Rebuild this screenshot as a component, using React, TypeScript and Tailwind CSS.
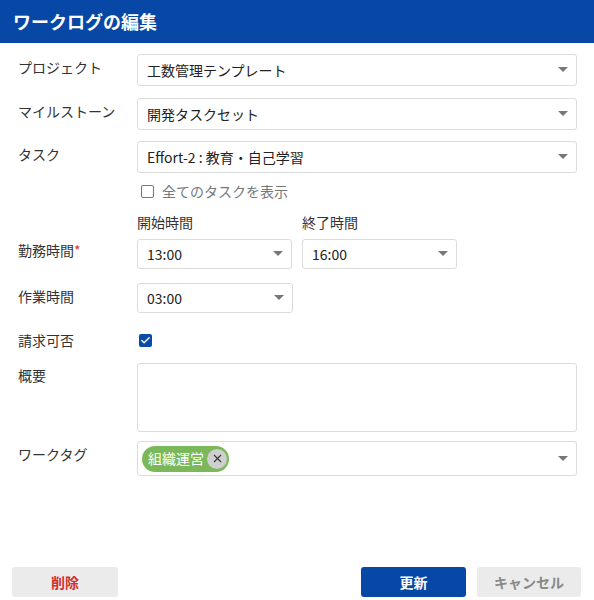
import { Check, X } from 'lucide-react';

const font = { fontFamily: '"Noto Sans CJK JP", "Noto Sans", sans-serif' };

function Caret() {
  return (
    <svg width="10" height="6" viewBox="0 0 10 6" className="shrink-0">
      <path d="M0 0h10L5 5z" fill="#777" />
    </svg>
  );
}

function Select({ value, width = 'w-[440px]', height = 'h-[32px]' }: { value: string; width?: string; height?: string }) {
  return (
    <div
      className={`flex ${width} ${height} items-center justify-between rounded-[3px] border border-[#dcdcdc] bg-white pl-[9px] pr-[8px] text-[14px] text-[#222]`}
    >
      <span>{value}</span>
      <Caret />
    </div>
  );
}

function Row({ label, required, children, top, labelPad = 'pt-[3px]' }: { label: string; required?: boolean; children: React.ReactNode; top: string; labelPad?: string }) {
  return (
    <div className={`flex ${top}`}>
      <div className={`w-[119px] shrink-0 text-[14px] text-[#333] ${labelPad}`}>
        {label}
        {required && <span className="text-[#e03030]">*</span>}
      </div>
      <div>{children}</div>
    </div>
  );
}

export default function App() {
  return (
    <div className="flex h-[600px] w-[594px] flex-col bg-white" style={font}>
      <header className="flex h-[43px] shrink-0 items-center bg-[#0747a6] px-[13px] text-[18px] font-bold text-white">
        ワークログの編集
      </header>

      <div className="flex flex-1 flex-col pl-[18px]">
        <Row label="プロジェクト" top="mt-[11px]">
          <Select value="工数管理テンプレート" />
        </Row>
        <Row label="マイルストーン" top="mt-[12px]">
          <Select value="開発タスクセット" />
        </Row>
        <Row label="タスク" top="mt-[11px]">
          <Select value="Effort-2 : 教育・自己学習" />
        </Row>

        <div className="ml-[121px] mt-[8px] flex items-center gap-[8px] text-[14px] text-[#777]">
          <span className="ml-[2px] h-[13px] w-[13px] rounded-[2px] border-[1.5px] border-[#777]" />
          全てのタスクを表示
        </div>

        <div className="ml-[119px] mt-[10px] flex gap-[10px] text-[14px] text-[#333]">
          <span className="w-[155px]">開始時間</span>
          <span>終了時間</span>
        </div>

        <Row label="勤務時間" required top="mt-[6px]" labelPad="pt-[1px]">
          <div className="flex gap-[10px]">
            <Select value="13:00" width="w-[155px]" height="h-[30px]" />
            <Select value="16:00" width="w-[155px]" height="h-[30px]" />
          </div>
        </Row>

        <Row label="作業時間" top="mt-[14px]">
          <Select value="03:00" width="w-[156px]" height="h-[30px]" />
        </Row>

        <Row label="請求可否" top="mt-[17px]" labelPad="pt-0">
          <span className="ml-[2px] mt-[4px] flex h-[13px] w-[13px] items-center justify-center rounded-[2px] bg-[#0b4ba8]">
            <Check size={11} strokeWidth={3} className="text-white" />
          </span>
        </Row>

        <Row label="概要" top="mt-[12px]" labelPad="pt-[2px]">
          <div className="h-[69px] w-[440px] rounded-[3px] border border-[#dcdcdc]" />
        </Row>

        <Row label="ワークタグ" top="mt-[9px]" labelPad="pt-[3px]">
          <div className="flex h-[35px] w-[440px] items-center justify-between rounded-[3px] border border-[#dcdcdc] pl-[4px] pr-[8px]">
            <span className="flex h-[26px] items-center gap-[3px] rounded-full bg-[#7ab85a] pl-[6px] pr-[2px] text-[14px] text-white">
              組織運営
              <span className="flex h-[20px] w-[20px] items-center justify-center rounded-full bg-[#cfcfcf]">
                <X size={13} strokeWidth={2} className="text-[#333]" />
              </span>
            </span>
            <Caret />
          </div>
        </Row>

        <div className="mt-auto mb-[3px] flex items-center pr-[13px]">
          <button className="-ml-[6px] h-[30px] w-[106px] rounded-[3px] bg-[#ebebeb] text-[14px] font-bold text-[#d32f2f]">
            削除
          </button>
          <div className="flex-1" />
          <button className="h-[30px] w-[105px] rounded-[3px] bg-[#0747a6] text-[14px] font-bold text-white">
            更新
          </button>
          <button className="ml-[11px] h-[30px] w-[104px] rounded-[3px] bg-[#ebebeb] text-[14px] font-bold text-[#888]">
            キャンセル
          </button>
        </div>
      </div>
    </div>
  );
}
